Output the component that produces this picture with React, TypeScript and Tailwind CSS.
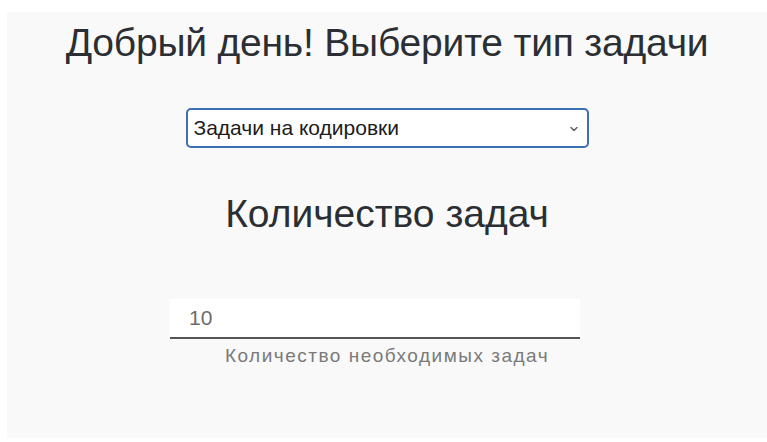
import { ChevronDown } from "lucide-react"

const App = () => {
  return (
    <div className="w-[767px] h-[442px] bg-white pt-3 pl-[7px] font-['Liberation_Sans',Arial,sans-serif]">
      <div className="h-[426px] bg-[#f9f9f9] flex flex-col items-center">
        <h1 className="mt-[8px] text-[39px] leading-[46px] text-[#2b2f33] tracking-[-0.2px]">
          Добрый день! Выберите тип задачи
        </h1>

        <div className="mt-[42px] relative w-[403px] h-[40px] bg-white border-2 border-[#3d6fb3] rounded-[5px] flex items-center px-[6px]">
          <span className="text-[21px] text-[#1c1c1c]">Задачи на кодировки</span>
          <ChevronDown className="absolute right-[7px] top-[13px] w-3 h-3 text-[#555]" strokeWidth={2.5} />
        </div>

        <h2 className="mt-[43px] text-[39px] leading-[46px] text-[#2b2f33]">Количество задач</h2>

        <div className="mt-[62px] w-full flex flex-col items-center">
          <div className="mr-[24px] w-[410px] h-[40px] bg-white border-b-2 border-[#555] flex items-center px-[19px]">
            <span className="text-[21px] text-[#6b6b6b]">10</span>
          </div>
          <span className="mt-[3px] text-[19px] text-[#7a7a7a] tracking-[1.5px]">Количество необходимых задач</span>
        </div>
      </div>
    </div>
  )
}

export default App
